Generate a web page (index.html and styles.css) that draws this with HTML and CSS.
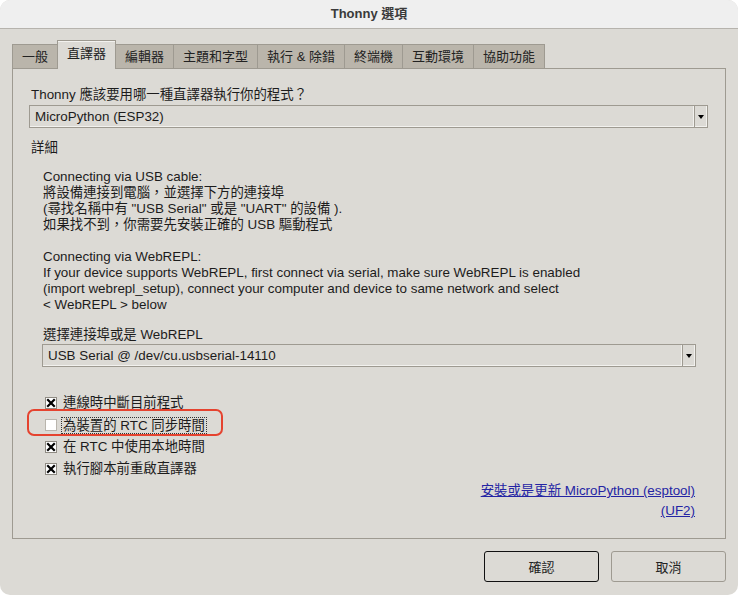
FILE: index.html
```html
<!DOCTYPE html>
<html lang="zh-Hant">
<head>
<meta charset="utf-8">
<title>Thonny 選項</title>
<link rel="stylesheet" href="styles.css">
</head>
<body>
<div class="window">
  <div class="titlebar">Thonny 選項</div>
  <div class="body">
    <div class="notebook">
      <div class="tabs">
        <div class="tab">一般</div>
        <div class="tab active">直譯器</div>
        <div class="tab">編輯器</div>
        <div class="tab">主題和字型</div>
        <div class="tab">執行 &amp; 除錯</div>
        <div class="tab">終端機</div>
        <div class="tab">互動環境</div>
        <div class="tab">協助功能</div>
      </div>
      <div class="panel">
        <div class="label">Thonny 應該要用哪一種直譯器執行你的程式？</div>
        <div class="combo combo-main">
          <span class="combo-text">MicroPython (ESP32)</span>
          <span class="combo-btn"><i class="arrow"></i></span>
        </div>
        <div class="label section">詳細</div>
        <div class="details">
          <p class="desc">Connecting via USB cable:<br>將設備連接到電腦，並選擇下方的連接埠<br>(尋找名稱中有 "USB Serial" 或是 "UART" 的設備 ).<br>如果找不到，你需要先安裝正確的 USB 驅動程式<br><br>Connecting via WebREPL:<br>If your device supports WebREPL, first connect via serial, make sure WebREPL is enabled<br>(import webrepl_setup), connect your computer and device to same network and select<br>&lt; WebREPL &gt; below</p>
          <div class="label port-label">選擇連接埠或是 WebREPL</div>
          <div class="combo combo-port">
            <span class="combo-text">USB Serial @ /dev/cu.usbserial-14110</span>
            <span class="combo-btn"><i class="arrow"></i></span>
          </div>
          <div class="checks">
            <div class="check">
              <span class="box"><svg width="12" height="12" viewBox="0 0 12 12"><path d="M3 3L9 9M9 3L3 9" stroke="#000" stroke-width="2.2" stroke-linecap="square"/></svg></span>
              <span class="check-text">連線時中斷目前程式</span>
            </div>
            <div class="check highlighted">
              <span class="box empty"></span>
              <span class="check-text focus">為裝置的 RTC 同步時間</span>
              <span class="annotation"></span>
            </div>
            <div class="check">
              <span class="box"><svg width="12" height="12" viewBox="0 0 12 12"><path d="M3 3L9 9M9 3L3 9" stroke="#000" stroke-width="2.2" stroke-linecap="square"/></svg></span>
              <span class="check-text">在 RTC 中使用本地時間</span>
            </div>
            <div class="check">
              <span class="box"><svg width="12" height="12" viewBox="0 0 12 12"><path d="M3 3L9 9M9 3L3 9" stroke="#000" stroke-width="2.2" stroke-linecap="square"/></svg></span>
              <span class="check-text">執行腳本前重啟直譯器</span>
            </div>
          </div>
          <div class="links">
            <a class="link">安裝或是更新 MicroPython (esptool)</a>
            <a class="link">(UF2)</a>
          </div>
        </div>
      </div>
    </div>
    <div class="footer">
      <button class="btn default">確認</button>
      <button class="btn">取消</button>
    </div>
  </div>
</div>
</body>
</html>
```

FILE: styles.css
```css
* { box-sizing: border-box; }
html, body { margin: 0; padding: 0; background: #ffffff; }
body {
  font-family: "Liberation Sans", "Noto Sans CJK TC", sans-serif;
  font-size: 13px;
  color: #1c1c1c;
}
.window {
  width: 738px;
  height: 595px;
  border-radius: 10px;
  overflow: hidden;
  background: #dcdad5;
  display: flex;
  flex-direction: column;
}
.titlebar {
  height: 29px;
  line-height: 28px;
  background: #efefef;
  border-bottom: 1px solid #b6b3ad;
  text-align: center;
  font-weight: bold;
  font-size: 13px;
  color: #3a3a3a;
}
.body {
  flex: 1;
  display: flex;
  flex-direction: column;
  padding: 11px 12px 0;
}
.notebook {
  flex: 1;
  display: flex;
  flex-direction: column;
}
.tabs {
  height: 28px;
  display: flex;
  align-items: flex-end;
}
.tab {
  height: 24px;
  line-height: 23px;
  padding: 0 9px;
  background: #bab5ab;
  border: 1px solid #9e9a91;
  border-bottom: none;
  margin-left: -1px;
  color: #222;
  white-space: nowrap;
}
.tab:first-child { margin-left: 0; }
.tab.active {
  height: 29px;
  line-height: 26px;
  margin-bottom: -1px;
  background: #dcdad5;
  position: relative;
  z-index: 1;
  box-shadow: inset 0 1px 0 #f3f2ef;
}
.panel {
  flex: 1;
  border: 1px solid #9e9a91;
  padding: 18px 17px 0 16px;
  font-size: 13.4px;
}
.label {
  line-height: 16px;
  padding-left: 2px;
}
.combo {
  display: flex;
  height: 23px;
  border: 1px solid #9e9a91;
  background: #dcdad5;
}
.combo-main { margin-top: 2px; }
.combo-text {
  flex: 1;
  line-height: 21px;
  padding-left: 5px;
  box-shadow: inset -1px -1px 0 #f2f1ee;
}
.combo-btn {
  width: 13px;
  border-left: 1px solid #9e9a91;
  display: flex;
  align-items: center;
  justify-content: center;
  box-shadow: inset -1px -1px 0 #f2f1ee;
}
.arrow {
  display: block;
  width: 0;
  height: 0;
  border-left: 3.5px solid transparent;
  border-right: 3.5px solid transparent;
  border-top: 4px solid #000;
}
.section { margin-top: 12px; }
.details {
  margin: 13px 12px 0 13px;
}
.desc {
  margin: 0;
  line-height: 16px;
  padding-left: 1px;
}
.port-label { margin-top: 14px; padding-left: 1px; }
.combo-port { margin-top: 1px; }
.checks { margin-top: 25px; }
.check {
  height: 22px;
  display: flex;
  align-items: center;
  position: relative;
}
.box {
  width: 12px;
  height: 12px;
  margin-left: 3px;
  margin-right: 6px;
  background: #ffffff;
  border: 1px solid #8f8b83;
  display: flex;
  align-items: center;
  justify-content: center;
}
.box svg { display: block; margin: -1px; }
.box.empty { border-color: #b9b5ad; }
.check-text { line-height: 16px; }
.focus {
  line-height: 15px;
  border: 1px dotted #333;
  padding: 0 1px;
  margin-left: -2px;
}
.annotation {
  position: absolute;
  left: -15px;
  top: -5px;
  width: 196px;
  height: 27px;
  border: 2px solid #e5432f;
  border-radius: 7px;
  pointer-events: none;
}
.links {
  margin-top: 1px;
  display: flex;
  flex-direction: column;
  align-items: flex-end;
  padding-right: 1px;
}
.link {
  line-height: 20px;
  color: #2424a4;
  text-decoration: underline;
  cursor: pointer;
}
.footer {
  height: 56px;
  padding-top: 12px;
  display: flex;
  justify-content: flex-end;
  gap: 12px;
}
.btn {
  width: 115px;
  height: 31px;
  font-family: inherit;
  font-size: 13px;
  color: #222;
  background: #dcdad5;
  border: 1px solid #9e9a91;
  border-radius: 3px;
  padding: 0;
}
.btn.default { border-color: #111; }
```
